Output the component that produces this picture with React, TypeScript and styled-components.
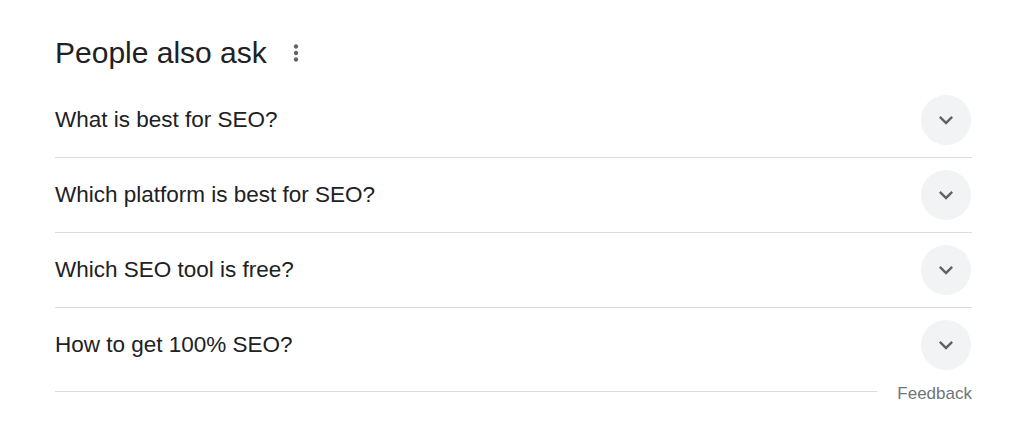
import styled, { createGlobalStyle } from 'styled-components';

const GlobalStyle = createGlobalStyle`
  html, body {
    margin: 0;
    padding: 0;
    background: #ffffff;
  }
  body {
    font-family: "Liberation Sans", Arial, sans-serif;
    color: #202124;
  }
`;

const Page = styled.div`
  width: 1024px;
  height: 433px;
  box-sizing: border-box;
  padding: 35px 0 0 55px;
`;

const Section = styled.section`
  width: 917px;
`;

const Header = styled.div`
  display: flex;
  align-items: center;
  height: 36px;
  margin-bottom: 12px;
`;

const Title = styled.h2`
  margin: 0;
  font-size: 30px;
  line-height: 36px;
  font-weight: 400;
  color: #202124;
`;

const MenuButton = styled.span`
  display: flex;
  align-items: center;
  justify-content: center;
  width: 26px;
  height: 26px;
  margin-left: 16px;
  color: #5f6368;
`;

const Row = styled.div<{ $last?: boolean }>`
  display: flex;
  align-items: center;
  justify-content: space-between;
  height: 74px;
  border-bottom: 1px solid ${({ $last }) => ($last ? 'transparent' : '#dadce0')};
  box-sizing: content-box;
`;

const Question = styled.span`
  font-size: 22.5px;
  line-height: 28px;
  color: #202124;
`;

const ExpandButton = styled.span`
  display: flex;
  align-items: center;
  justify-content: center;
  width: 50px;
  height: 50px;
  border-radius: 50%;
  background: #f1f3f4;
  color: #5f6368;
  margin-right: 1px;
`;

const Footer = styled.div`
  display: flex;
  align-items: center;
  height: 24px;
  margin-top: -1px;
`;

const FooterLine = styled.div`
  flex: 1;
  height: 1px;
  background: #dadce0;
  margin-right: 20px;
  margin-bottom: 6px;
`;

const Feedback = styled.span`
  font-size: 17px;
  line-height: 20px;
  color: #70757a;
`;

const questions = [
  'What is best for SEO?',
  'Which platform is best for SEO?',
  'Which SEO tool is free?',
  'How to get 100% SEO?',
];

function MoreVert() {
  return (
    <svg width="26" height="26" viewBox="0 0 24 24" fill="currentColor">
      <path d="M12 8c1.1 0 2-.9 2-2s-.9-2-2-2-2 .9-2 2 .9 2 2 2zm0 2c-1.1 0-2 .9-2 2s.9 2 2 2 2-.9 2-2-.9-2-2-2zm0 6c-1.1 0-2 .9-2 2s.9 2 2 2 2-.9 2-2-.9-2-2-2z" />
    </svg>
  );
}

function ExpandMore() {
  return (
    <svg width="28" height="28" viewBox="0 0 24 24" fill="currentColor">
      <path d="M16.59 8.59L12 13.17 7.41 8.59 6 10l6 6 6-6z" />
    </svg>
  );
}

export default function App() {
  return (
    <Page>
      <GlobalStyle />
      <Section>
        <Header>
          <Title>People also ask</Title>
          <MenuButton>
            <MoreVert />
          </MenuButton>
        </Header>
        {questions.map((q, i) => (
          <Row key={q} $last={i === questions.length - 1}>
            <Question>{q}</Question>
            <ExpandButton>
              <ExpandMore />
            </ExpandButton>
          </Row>
        ))}
        <Footer>
          <FooterLine />
          <Feedback>Feedback</Feedback>
        </Footer>
      </Section>
    </Page>
  );
}
